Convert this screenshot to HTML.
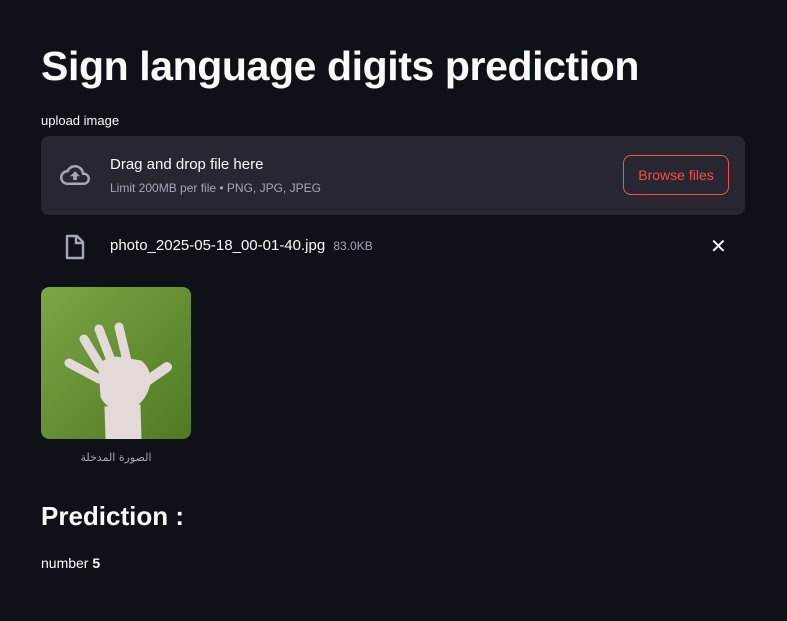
<!DOCTYPE html>
<html><head><meta charset="utf-8"><style>
body{margin:0;width:787px;height:621px;background:#0e1117;color:#fafafa;font-family:"Liberation Sans","DejaVu Sans",sans-serif;overflow:hidden;position:relative}
.a{position:absolute}
h1{position:absolute;left:41px;top:40px;margin:0;font-size:41px;font-weight:bold;letter-spacing:-0.4px;line-height:52px}
</style></head><body>
<h1>Sign language digits prediction</h1>
<div class="a" style="left:41px;top:113px;font-size:13px">upload image</div>
<div class="a" style="left:41px;top:136px;width:704px;height:79px;background:#262730;border-radius:8px"></div>
<svg class="a" style="left:56px;top:160px" width="38" height="30" viewBox="0 0 24 24"><path d="M19.35 10.04A7.49 7.49 0 0 0 12 4C9.11 4 6.6 5.64 5.35 8.04A5.994 5.994 0 0 0 0 14c0 3.31 2.69 6 6 6h13c2.76 0 5-2.24 5-5 0-2.64-2.05-4.78-4.65-4.96zM19 18H6c-2.21 0-4-1.790-4-4s1.79-4 4-4h.71C7.37 7.69 9.48 6 12 6c3.04 0 5.5 2.46 5.5 5.5v.5H19c1.66 0 3 1.34 3 3s-1.34 3-3 3z M8 13h2.55v3h2.9v-3H16l-4-4z" fill="#a3a8b8"/></svg>
<div class="a" style="left:110px;top:156px;font-size:15px">Drag and drop file here</div>
<div class="a" style="left:110px;top:181px;font-size:12px;color:#a3a8b8">Limit 200MB per file • PNG, JPG, JPEG</div>
<div class="a" style="left:623px;top:155px;width:104px;height:38px;border:1px solid #ff4b4b;border-radius:8px;color:#ff4b4b;font-size:14px;line-height:38px;text-align:center">Browse files</div>
<svg class="a" style="left:64px;top:234px" width="22" height="26" viewBox="0 0 22 26"><path d="M3 2h10l6 6v16H3z" fill="none" stroke="#a3a8b8" stroke-width="2.4" stroke-linejoin="round"/><path d="M12 2v7h7" fill="none" stroke="#a3a8b8" stroke-width="2.4"/></svg>
<div class="a" style="left:110px;top:237px;font-size:15px">photo_2025-05-18_00-01-40.jpg <span style="font-size:12px;color:#a3a8b8;margin-left:4px">83.0KB</span></div>
<div class="a" style="left:710px;top:234px;font-size:20px;color:#fafafa">✕</div>
<svg class="a" style="left:41px;top:287px;border-radius:8px" width="150" height="152" viewBox="0 0 150 152">
<defs><linearGradient id="g" x1="0" y1="0" x2="1" y2="1"><stop offset="0" stop-color="#7aa646"/><stop offset="1" stop-color="#4f7a22"/></linearGradient></defs>
<rect width="150" height="152" rx="8" fill="url(#g)"/>
<g fill="#e3dad8" stroke="#e3dad8" stroke-linecap="round">
<path d="M64 120 L65 152 H100 L99 118 Z"/>
<path d="M58 80 Q60 72 75 70 L100 74 Q112 84 108 100 Q102 120 82 124 Q66 122 60 110 Z"/>
<line x1="58" y1="92" x2="28" y2="76" stroke-width="9"/>
<line x1="60" y1="80" x2="43" y2="52" stroke-width="9"/>
<line x1="71" y1="76" x2="58" y2="42" stroke-width="9"/>
<line x1="86" y1="74" x2="78" y2="40" stroke-width="9"/>
<line x1="103" y1="96" x2="126" y2="80" stroke-width="10"/>
</g></svg>
<div class="a" style="left:41px;top:451px;width:150px;text-align:center;font-size:11px;color:#a3a8b8;font-family:'DejaVu Sans',sans-serif">الصورة المدخلة</div>
<div class="a" style="left:41px;top:501px;font-size:26px;font-weight:bold">Prediction :</div>
<div class="a" style="left:41px;top:555px;font-size:14px">number <b>5</b></div>
</body></html>
